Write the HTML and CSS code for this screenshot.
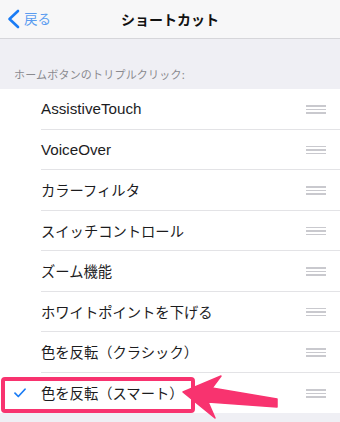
FILE: index.html
```html
<!DOCTYPE html>
<html lang="ja">
<head>
<meta charset="utf-8">
<title>ショートカット</title>
<link rel="stylesheet" href="styles.css">
</head>
<body>
<div class="page">
  <header class="nav">
    <div class="nav-left">
      <span class="back">
        <svg class="chev" width="14" height="20" viewBox="0 0 14 20"><path d="M12 2 L3.5 10 L12 18" fill="none" stroke="#1a7cf5" stroke-width="2.6" stroke-linecap="round" stroke-linejoin="round"/></svg>
        <span class="back-text">戻る</span>
      </span>
    </div>
    <div class="nav-title">ショートカット</div>
    <div class="nav-right"></div>
  </header>

  <div class="section-head">ホームボタンのトリプルクリック:</div>

  <ul class="list">
    <li class="row"><span class="check"></span><span class="inner"><span class="label">AssistiveTouch</span><span class="handle"><i></i><i></i><i></i></span></span></li>
    <li class="row"><span class="check"></span><span class="inner"><span class="label">VoiceOver</span><span class="handle"><i></i><i></i><i></i></span></span></li>
    <li class="row"><span class="check"></span><span class="inner"><span class="label ja">カラーフィルタ</span><span class="handle"><i></i><i></i><i></i></span></span></li>
    <li class="row"><span class="check"></span><span class="inner"><span class="label ja">スイッチコントロール</span><span class="handle"><i></i><i></i><i></i></span></span></li>
    <li class="row"><span class="check"></span><span class="inner"><span class="label ja">ズーム機能</span><span class="handle"><i></i><i></i><i></i></span></span></li>
    <li class="row"><span class="check"></span><span class="inner"><span class="label ja">ホワイトポイントを下げる</span><span class="handle"><i></i><i></i><i></i></span></span></li>
    <li class="row"><span class="check"></span><span class="inner"><span class="label ja">色を反転（クラシック）</span><span class="handle"><i></i><i></i><i></i></span></span></li>
    <li class="row last"><span class="check"><svg width="12" height="10" viewBox="0 0 12 10"><path d="M1 5.2 L4.3 8.5 L11 1.2" fill="none" stroke="#1a7cf5" stroke-width="1.7" stroke-linecap="round" stroke-linejoin="round"/></svg></span><span class="inner"><span class="label ja">色を反転（スマート）</span><span class="handle"><i></i><i></i><i></i></span></span></li>
  </ul>

  <div class="mark-box"></div>
  <svg class="mark-arrow" width="340" height="422" viewBox="0 0 340 422"><polygon points="183,392 221,376 212,388 277,399 277,407 208,402 215,418" fill="#f8336f" stroke="#f8336f" stroke-width="1.5" stroke-linejoin="round"/></svg>
</div>
</body>
</html>
```

FILE: styles.css
```css
* { box-sizing: border-box; }
html, body { margin: 0; padding: 0; }
body {
  width: 340px;
  height: 422px;
  overflow: hidden;
  background: #efeff4;
  font-family: "Liberation Sans", "Noto Sans CJK JP", sans-serif;
  color: #1c1c1e;
}
.page {
  position: relative;
  width: 340px;
  height: 422px;
}
.nav {
  height: 39px;
  background: #f7f7f8;
  border-bottom: 1px solid #d6d6da;
  display: grid;
  grid-template-columns: 1fr auto 1fr;
  align-items: center;
}
.nav-left { display: flex; align-items: center; padding-left: 6px; }
.back { display: flex; align-items: center; gap: 4px; }
.chev { display: block; }
.back-text {
  font-family: "Noto Sans CJK JP", sans-serif;
  font-size: 13.5px;
  color: #5a9cf0;
  line-height: 1;
}
.nav-title {
  font-family: "Noto Sans CJK JP", sans-serif;
  font-size: 14px;
  font-weight: 700;
  color: #111;
}
.section-head {
  height: 50px;
  display: flex;
  align-items: flex-end;
  padding: 0 14px 7px;
  font-family: "Noto Sans CJK JP", sans-serif;
  font-size: 11px;
  letter-spacing: 0.2px;
  color: #8a8a8f;
}
.list {
  list-style: none;
  margin: 0;
  padding: 0;
  background: #fff;
}
.row {
  display: flex;
  height: 40.5px;
  padding-left: 14px;
}
.check {
  width: 27px;
  display: flex;
  align-items: center;
}
.inner {
  flex: 1;
  display: flex;
  align-items: center;
  justify-content: space-between;
  border-bottom: 1px solid #e3e3e6;
  padding-right: 14px;
}
.row.last .inner { border-bottom: none; }
.label {
  font-size: 15.2px;
  color: #1c1c1e;
}
.label.ja {
  font-family: "Noto Sans CJK JP", sans-serif;
  font-size: 14.3px;
}
.handle {
  width: 20px;
  display: flex;
  flex-direction: column;
  gap: 2px;
  margin-top: 1px;
}
.handle i {
  display: block;
  height: 1.5px;
  background: #c9c9ce;
}
.mark-box {
  position: absolute;
  left: 1px;
  top: 377px;
  width: 194px;
  height: 36px;
  border: 4px solid #f8336f;
  border-radius: 4px;
}
.mark-arrow {
  position: absolute;
  left: 0;
  top: 0;
  pointer-events: none;
}
```
